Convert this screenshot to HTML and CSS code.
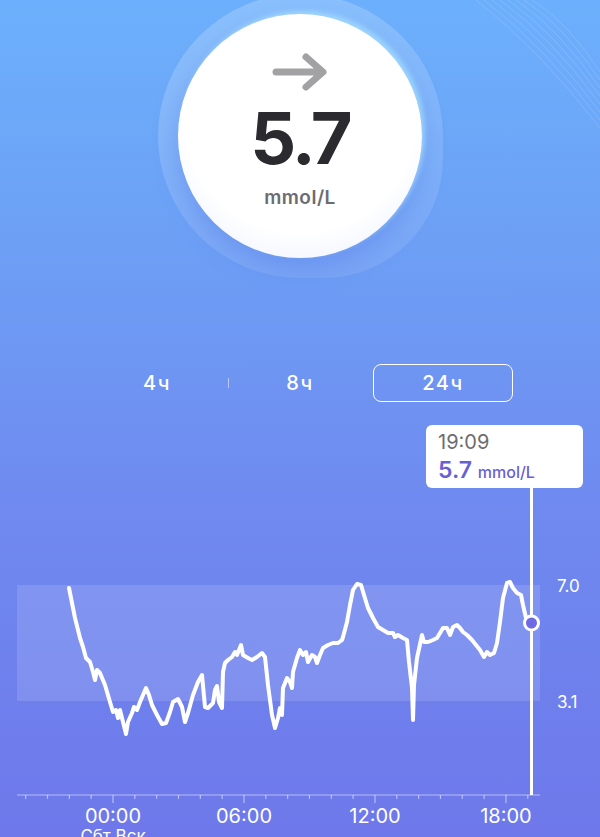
FILE: index.html
```html
<!DOCTYPE html>
<html lang="ru">
<head>
    <meta charset="UTF-8">
    <meta name="viewport" content="width=device-width, initial-scale=1.0">
    <title>Глюкоза</title>
    <link rel="stylesheet" href="styles.css">
</head>
<body>
    <div class="screen">
        <svg class="decor" width="130" height="140" viewBox="0 0 130 140">
            <path d="M6 0 Q70 50 130 128" />
            <path d="M14 0 Q74 46 130 120" />
            <path d="M22 0 Q78 42 130 112" />
            <path d="M30 0 Q82 38 130 104" />
            <path d="M38 0 Q86 34 130 96" />
            <path d="M46 0 Q90 30 130 88" />
            <path d="M54 0 Q94 26 130 80" />
            <path d="M62 0 Q98 22 130 72" />
        </svg>

        <div class="hero">
            <div class="halo">
                <div class="reading">
                    <svg class="trend" width="58" height="40" viewBox="0 0 58 40">
                        <path d="M5 20 H51 M35 5 L52 20 L35 35" />
                    </svg>
                    <div class="value">5.7</div>
                    <div class="unit">mmol/L</div>
                </div>
            </div>
        </div>

        <div class="tabs">
            <div class="tab">4ч</div>
            <div class="tab-sep"></div>
            <div class="tab">8ч</div>
            <div></div>
            <div class="tab active">24ч</div>
        </div>

        <div class="chart">
            <div class="tooltip">
                <div class="tip-time">19:09</div>
                <div class="tip-value">5.7 <span>mmol/L</span></div>
            </div>
            <svg class="plot" width="600" height="435" viewBox="0 402 600 435">
                <rect class="range" x="17" y="585" width="523" height="116" />
                <text class="y-label" x="557" y="592">7.0</text>
                <text class="y-label" x="557" y="708">3.1</text>

                <line class="axis" x1="17" y1="795" x2="540" y2="795" />
                <g class="ticks" id="ticks"></g>

                <polyline class="curve" points="69,588 75,618 80,638 83,647 86,658 90,662 93,672 95,680 97,670 100,673 105,685 110,702 113,712 116,710 118,718 120,710 123,722 126,734 128,722 132,713 134,707 137,710 140,702 143,695 146,688 149,695 152,705 157,715 162,724 166,723 170,712 173,702 178,699 182,707 185,722 188,713 193,695 198,682 202,675 205,707 208,708 213,703 215,690 217,686 219,702 222,708 223,672 225,663 228,660 232,657 235,652 237,655 241,645 243,655 248,658 252,660 257,657 262,653 265,657 268,685 272,715 275,728 278,718 280,708 282,715 283,688 287,678 290,682 292,688 293,672 297,658 300,650 303,655 306,652 308,662 312,655 315,657 317,663 320,655 323,648 328,645 333,643 338,643 342,640 343,637 347,622 350,605 353,590 357,584 361,585 364,595 368,608 373,618 378,627 383,630 388,633 393,633 395,637 398,635 403,638 407,640 409,662 412,688 413,720 414,685 417,658 422,635 424,642 428,642 433,640 437,638 440,633 443,628 447,628 450,635 453,627 457,625 460,628 463,632 467,635 472,640 476,645 480,650 484,657 487,652 490,655 494,653 497,643 500,622 503,598 507,583 510,582 513,588 517,593 521,595 523,605 526,618 531,623" />

                <line class="cursor" x1="531.5" y1="488" x2="531.5" y2="795" />
                <circle class="dot" cx="531.5" cy="623" r="7" />

                <text class="x-label" x="113" y="823">00:00</text>
                <text class="x-label" x="244" y="823">06:00</text>
                <text class="x-label" x="375" y="823">12:00</text>
                <text class="x-label" x="506" y="823">18:00</text>
                <text class="x-day" x="113" y="842">Сбт Вск</text>
            </svg>
        </div>
    </div>

    <script>
        // hourly ticks, 20:00 of the day before through 19:00
        const ticks = document.getElementById('ticks');
        const hourWidth = 21.83;

        for (let h = -4; h <= 19; h++) {
            const x = 113 + h * hourWidth;
            const major = h % 6 === 0;
            const tick = document.createElementNS('http://www.w3.org/2000/svg', 'line');
            tick.setAttribute('x1', x);
            tick.setAttribute('x2', x);
            tick.setAttribute('y1', 795);
            tick.setAttribute('y2', major ? 803 : 799);
            ticks.appendChild(tick);
        }
    </script>
</body>
</html>
```

FILE: styles.css
```css
body {
    margin: 0;
    font-family: 'Inter', 'Noto Sans', sans-serif;
    overflow: hidden;
}
.screen {
    position: relative;
    width: 600px;
    height: 837px;
    overflow: hidden;
    background: linear-gradient(180deg, #6cb0fc 0%, #6d9ff5 30%, #6f8af0 60%, #6e78ea 100%);
}
.decor {
    position: absolute;
    top: 0;
    right: 0;
}
.decor path {
    fill: none;
    stroke: rgba(255, 255, 255, 0.14);
    stroke-width: 1;
}

/* current reading */
.hero {
    height: 364px;
    display: flex;
    justify-content: center;
}
.halo {
    width: 285px;
    height: 284px;
    margin-top: -6px;
    border-radius: 50% 50% 42% 50%;
    background: linear-gradient(160deg, rgba(255, 255, 255, 0.22), rgba(255, 255, 255, 0.08));
    display: flex;
    align-items: center;
    justify-content: center;
}
.reading {
    width: 244px;
    height: 244px;
    border-radius: 50%;
    box-sizing: border-box;
    padding-top: 38px;
    display: flex;
    flex-direction: column;
    align-items: center;
    background: radial-gradient(circle at 50% 42%, #fff 62%, #f3f6ff 80%, #dbe5fd 100%);
    box-shadow: 3px -3px 5px rgba(170, 228, 255, 0.7), 0 10px 24px rgba(70, 105, 225, 0.35);
}
.trend path {
    fill: none;
    stroke: #a2a2a4;
    stroke-width: 7;
    stroke-linecap: round;
    stroke-linejoin: round;
}
.value {
    margin-top: 10px;
    font-size: 72px;
    line-height: 1;
    font-weight: 700;
    color: #2b2b2f;
    letter-spacing: -3px;
}
.unit {
    margin-top: 14px;
    font-size: 19px;
    line-height: 1;
    font-weight: 600;
    color: #6c6c70;
    letter-spacing: 0.5px;
}

/* period switch */
.tabs {
    width: 426px;
    height: 38px;
    margin: 0 auto;
    display: grid;
    grid-template-columns: 140px 3px 140px 3px 140px;
}
.tab {
    display: flex;
    align-items: center;
    justify-content: center;
    color: #fff;
    font-size: 20px;
    font-weight: 500;
    letter-spacing: 1.5px;
}
.tab-sep {
    align-self: center;
    justify-self: center;
    width: 1.5px;
    height: 10px;
    background: rgba(255, 255, 255, 0.5);
}
.tab.active {
    border: 1.5px solid #fff;
    border-radius: 8px;
}

/* chart */
.chart {
    position: relative;
    height: 435px;
}
.plot {
    display: block;
}
.range {
    fill: rgba(255, 255, 255, 0.13);
}
.axis,
.ticks line {
    stroke: rgba(255, 255, 255, 0.5);
    stroke-width: 1.2;
}
.curve {
    fill: none;
    stroke: #fff;
    stroke-width: 4;
    stroke-linejoin: round;
    stroke-linecap: round;
}
.cursor {
    stroke: #fff;
    stroke-width: 3;
}
.dot {
    fill: #6f69e4;
    stroke: #fff;
    stroke-width: 3;
}
.y-label {
    fill: #fff;
    font-size: 17px;
}
.x-label {
    fill: #fff;
    font-size: 20px;
    text-anchor: middle;
}
.x-day {
    fill: #fff;
    font-size: 17px;
    text-anchor: middle;
}
.tooltip {
    position: absolute;
    left: 426px;
    top: 23px;
    width: 157px;
    height: 63px;
    box-sizing: border-box;
    padding: 5px 0 0 12px;
    background: #fff;
    border-radius: 6px;
}
.tip-time {
    font-size: 20px;
    line-height: 24px;
    color: #6d6d70;
}
.tip-value {
    margin-top: 2px;
    font-size: 23px;
    line-height: 28px;
    font-weight: 600;
    color: #6a5fd6;
}
.tip-value span {
    font-size: 16px;
    font-weight: 500;
}
```
